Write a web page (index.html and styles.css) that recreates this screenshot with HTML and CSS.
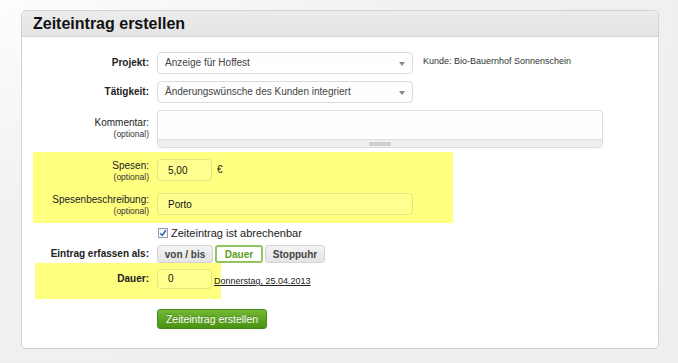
FILE: index.html
```html
<!DOCTYPE html>
<html lang="de">
<head>
    <meta charset="UTF-8">
    <meta name="viewport" content="width=device-width, initial-scale=1.0">
    <title>Zeiteintrag erstellen</title>
    <link rel="stylesheet" href="styles.css">
</head>
<body>
    <div class="panel">
        <h1 class="panel-title">Zeiteintrag erstellen</h1>
        <form class="panel-body" id="entryForm">
            <div class="row row-select">
                <label class="lbl strong">Projekt:</label>
                <div class="select">Anzeige für Hoffest<span class="caret"></span></div>
                <span class="hint">Kunde: Bio-Bauernhof Sonnenschein</span>
            </div>

            <div class="row row-select">
                <label class="lbl strong">Tätigkeit:</label>
                <div class="select">Änderungswünsche des Kunden integriert<span class="caret"></span></div>
            </div>

            <div class="row row-top row-comment">
                <label class="lbl">Kommentar:<small>(optional)</small></label>
                <div class="textarea">
                    <div class="scrollbar"><span class="thumb"></span></div>
                </div>
            </div>

            <div class="mark mark-expenses">
                <div class="row row-top">
                    <label class="lbl">Spesen:<small>(optional)</small></label>
                    <div class="input input-short">5,00</div>
                    <span class="unit">€</span>
                </div>
                <div class="row row-top row-desc">
                    <label class="lbl">Spesenbeschreibung:<small>(optional)</small></label>
                    <div class="input input-wide">Porto</div>
                </div>
            </div>

            <div class="row row-check">
                <span class="lbl"></span>
                <span class="checkbox">
                    <svg width="8" height="8" viewBox="0 0 8 8">
                        <path d="M1.2 4.2 L3.2 6.4 L6.9 1.3" fill="none" stroke="#2f5fb3" stroke-width="1.5"/>
                    </svg>
                </span>
                <span class="check-text">Zeiteintrag ist abrechenbar</span>
            </div>

            <div class="row row-mode">
                <label class="lbl strong">Eintrag erfassen als:</label>
                <div class="segments">
                    <button type="button" class="seg">von / bis</button>
                    <button type="button" class="seg active">Dauer</button>
                    <button type="button" class="seg">Stoppuhr</button>
                </div>
            </div>

            <div class="mark mark-duration">
                <div class="row">
                    <label class="lbl strong">Dauer:</label>
                    <div class="input input-short input-dur">0</div>
                    <a class="date" href="#">Donnerstag, 25.04.2013</a>
                </div>
            </div>

            <div class="row row-submit">
                <span class="lbl"></span>
                <button type="button" class="submit">Zeiteintrag erstellen</button>
            </div>
        </form>
    </div>
</body>
</html>
```

FILE: styles.css
```css
body {
    margin: 0;
    padding: 10px 0 0 21px;
    height: 353px;
    font-family: "Liberation Sans", Arial, sans-serif;
    font-size: 10px;
    color: #222;
    background: radial-gradient(ellipse at 0 0, #fdfdfd 0%, #f0f0f0 45%, #efefef 100%);
}
.panel {
    width: 636px;
    border: 1px solid #d2d2d2;
    border-radius: 5px;
    background: #fff;
}
.panel-title {
    margin: 0;
    height: 25px;
    padding-left: 11px;
    font-size: 16px;
    line-height: 26px;
    color: #111;
    background: linear-gradient(#ececec, #e4e4e4);
    border-bottom: 1px solid #d6d6d6;
    border-radius: 5px 5px 0 0;
}
.panel-body {
    padding: 15px 0 19px 0;
}
.row {
    display: flex;
    align-items: center;
}
.row-top {
    align-items: flex-start;
}
.row-select + .row-select,
.row-select + .row-top {
    margin-top: 7px;
}
.lbl {
    width: 127px;
    margin-right: 8px;
    text-align: right;
    flex-shrink: 0;
    line-height: 12px;
    color: #222;
}
.lbl small {
    display: block;
    font-size: 8.5px;
    line-height: 11px;
    color: #333;
}
.strong {
    font-weight: bold;
}
.row-top .lbl {
    padding-top: 5px;
}
.row-comment .lbl {
    padding-top: 7px;
}
.select,
.input,
.textarea {
    box-sizing: border-box;
    border: 1px solid #dcdcdc;
    border-radius: 4px;
    background: linear-gradient(#fdfdfd, #fff);
}
.select {
    position: relative;
    width: 256px;
    height: 22px;
    padding-left: 7px;
    line-height: 20px;
    color: #444;
}
.caret {
    position: absolute;
    right: 7px;
    top: 9px;
    border-left: 3px solid transparent;
    border-right: 3px solid transparent;
    border-top: 4px solid #888;
}
.hint {
    margin-left: 10px;
    margin-top: -4px;
    font-size: 9px;
    color: #333;
}
.textarea {
    position: relative;
    width: 446px;
    height: 38px;
    overflow: hidden;
}
.scrollbar {
    position: absolute;
    left: 0;
    right: 0;
    bottom: 0;
    height: 7px;
    background: #efefef;
    border-top: 1px solid #e0e0e0;
}
.thumb {
    position: absolute;
    left: 211px;
    top: 2px;
    width: 22px;
    height: 4px;
    background: #cfcfcf;
}
.mark {
    background: #ffff80;
}
.mark-expenses {
    margin: 4px 0 0 11px;
    width: 420px;
    padding: 7px 0 6px 0;
}
.mark-expenses .lbl {
    width: 116px;
}
.mark-duration .lbl {
    width: 114px;
}
.mark-expenses .row-top .lbl {
    padding-top: 1px;
}
.mark .input {
    border-color: rgba(0, 0, 0, 0.1);
    background: rgba(255, 255, 255, 0.12);
}
.input {
    height: 22px;
    padding-left: 10px;
    line-height: 21px;
    font-size: 10px;
    color: #111;
}
.input-short {
    width: 55px;
}
.input-wide {
    width: 256px;
}
.row-desc {
    margin-top: 10px;
}
.unit {
    margin-left: 5px;
    line-height: 22px;
}
.row-check {
    margin-top: 4px;
    height: 12px;
}
.checkbox {
    box-sizing: border-box;
    width: 10px;
    height: 10px;
    margin-left: 1px;
    border: 1px solid #8f9bb3;
    background: linear-gradient(#eef1f6, #fff);
    display: flex;
    align-items: center;
    justify-content: center;
}
.checkbox svg {
    flex-shrink: 0;
}
.check-text {
    margin-left: 3px;
    font-size: 11px;
    color: #222;
}
.row-mode {
    margin-top: 6px;
}
.segments {
    display: flex;
    gap: 2px;
}
.seg {
    box-sizing: border-box;
    height: 18px;
    padding: 0;
    font-family: inherit;
    font-size: 10px;
    font-weight: bold;
    color: #444;
    border: 1px solid #d4d4d4;
    border-radius: 3px;
    background: linear-gradient(#f4f4f4, #e4e4e4);
}
.seg:nth-child(1) {
    width: 56px;
}
.seg:nth-child(2) {
    width: 48px;
}
.seg:nth-child(3) {
    width: 60px;
}
.seg.active {
    color: #5c9e22;
    background: #fff;
    border: 2px solid #8fc55c;
}
.mark-duration {
    margin-left: 13px;
    width: 186px;
    padding: 6px 0 10px 0;
}
.input-dur {
    height: 20px;
    line-height: 18px;
    flex-shrink: 0;
}
.date {
    margin-left: 2px;
    margin-top: 4px;
    white-space: nowrap;
    font-size: 9px;
    color: #222;
    text-decoration: underline;
}
.row-submit {
    margin-top: 10px;
}
.submit {
    width: 110px;
    height: 20px;
    padding: 0;
    font-family: inherit;
    font-size: 10.5px;
    color: #fff;
    text-shadow: 0 -1px 0 rgba(0, 0, 0, 0.25);
    border: 1px solid #4a8c1c;
    border-radius: 3px;
    background: linear-gradient(#72b833, #4a9212);
    cursor: pointer;
}
```
